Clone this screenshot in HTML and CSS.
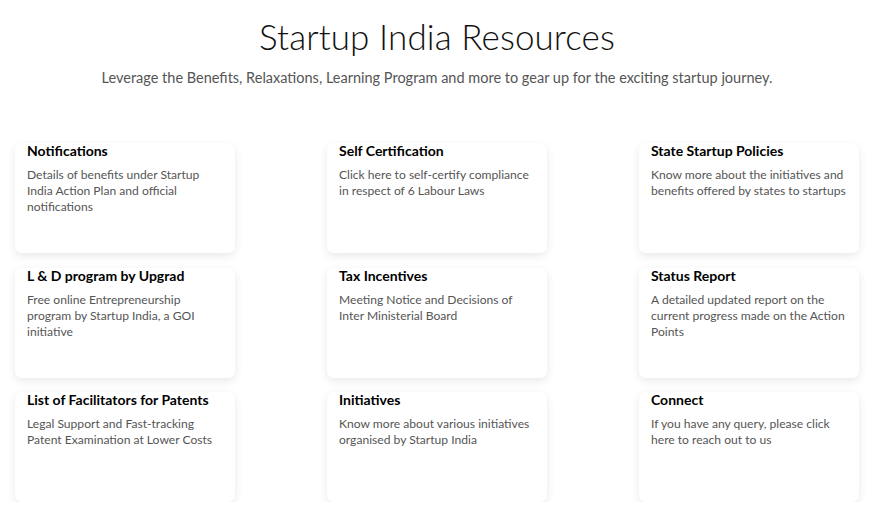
FILE: index.html
```html
<!DOCTYPE html>
<html>
<head>
<meta charset="utf-8">
<link rel="stylesheet" href="styles.css">
</head>
<body>
<section class="resources">
  <h1 class="title">Startup India Resources</h1>
  <p class="subtitle">Leverage the Benefits, Relaxations, Learning Program and more to gear up for the exciting startup journey.</p>
  <div class="grid">
    <div class="card"><h3>Notifications</h3><p>Details of benefits under Startup India Action Plan and official notifications</p></div>
    <div class="card"><h3>Self Certification</h3><p>Click here to self-certify compliance in respect of 6 Labour Laws</p></div>
    <div class="card"><h3>State Startup Policies</h3><p>Know more about the initiatives and benefits offered by states to startups</p></div>
    <div class="card"><h3>L &amp; D program by Upgrad</h3><p>Free online Entrepreneurship program by Startup India, a GOI initiative</p></div>
    <div class="card"><h3>Tax Incentives</h3><p>Meeting Notice and Decisions of Inter Ministerial Board</p></div>
    <div class="card"><h3>Status Report</h3><p>A detailed updated report on the current progress made on the Action Points</p></div>
    <div class="card"><h3>List of Facilitators for Patents</h3><p>Legal Support and Fast-tracking Patent Examination at Lower Costs</p></div>
    <div class="card"><h3>Initiatives</h3><p>Know more about various initiatives organised by Startup India</p></div>
    <div class="card"><h3>Connect</h3><p>If you have any query, please click here to reach out to us</p></div>
  </div>
</section>
</body>
</html>
```

FILE: styles.css
```css
html, body {
  margin: 0;
  padding: 0;
  background: #fff;
  font-family: Lato, "Open Sans", Arial, sans-serif;
}
.resources {
  padding: 14px 17px 0 15px;
}
.title {
  margin: 0;
  text-align: center;
  font-weight: 300;
  font-size: 35px;
  line-height: 44px;
  color: #111;
  letter-spacing: 0.1px;
}
.subtitle {
  margin: 11px 0 0;
  text-align: center;
  font-size: 14.5px;
  line-height: 18px;
  color: #555;
}
.grid {
  margin-top: 56px;
  display: grid;
  grid-template-columns: repeat(3, 220px);
  justify-content: space-between;
  row-gap: 14.5px;
}
.card {
  height: 110px;
  background: #fff;
  border-radius: 7px;
  box-shadow: 0 3px 10px rgba(0,0,0,0.09);
  padding: 0 8px 0 12px;
  box-sizing: border-box;
}
.card h3 {
  margin: 0;
  font-size: 14px;
  line-height: 16px;
  font-weight: 700;
  color: #000;
}
.card p {
  margin: 8px 0 0;
  font-size: 12.1px;
  line-height: 16px;
  color: #555;
}
```
